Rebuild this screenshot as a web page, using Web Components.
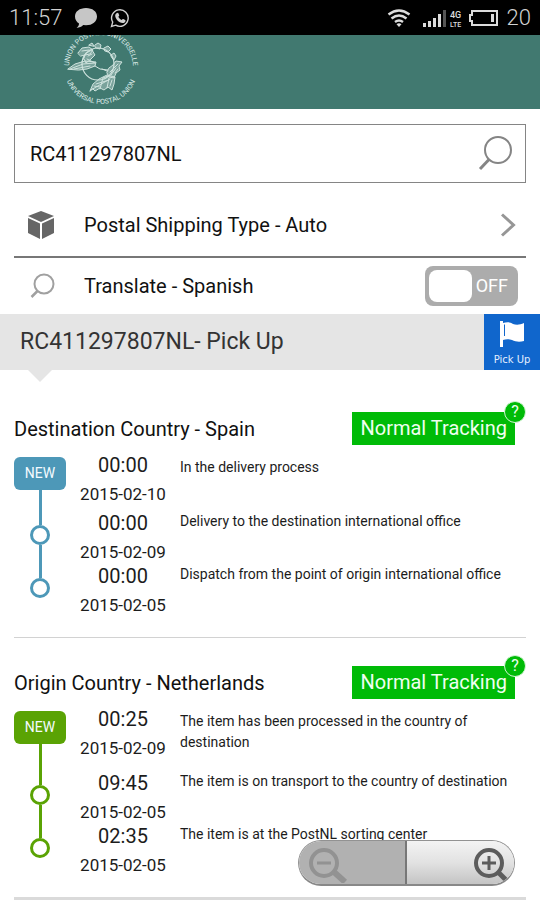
<!DOCTYPE html>
<html lang="en">
<head>
<meta charset="utf-8">
<meta name="viewport" content="width=device-width, initial-scale=1">
<title>Postal tracking</title>
<style>
  body {
    margin: 0;
    background: #fff;
    color: #1c1c1c;
    font-family: Roboto, "Liberation Sans", sans-serif;
    font-size: 20px;
  }
</style>
</head>
<body>

<template id="status-bar-template">
  <style>
    :host {
      display: flex;
      align-items: center;
      justify-content: space-between;
      height: 35px;
      padding: 0 9px;
      background: #000;
      color: #d2d2d2;
      font-size: 22px;
      font-weight: 300;
    }
    div { display: flex; align-items: center; }
    .left { gap: 12px; }
    .right { gap: 4px; }
    .level { margin-left: 4px; }
    svg { display: block; }
  </style>
  <div class="left">
    <span>11:57</span>
    <svg width="24" height="22" viewBox="0 0 24 22"><path fill="#c6c6c6" d="M12 1C5.500 1 1 4.500 1 9.500c0 3 1.600 5.400 4 7 0 2-1 3.300-2.400 4.400 2.700 0 5-1 6.600-2.800l2.800.2c6.500 0 11-3.800 11-8.800S18.500 1 12 1z"/></svg>
    <svg width="20" height="20" viewBox="0 0 20 20"><path fill="none" stroke="#d0d0d0" stroke-width="1.400" d="M1.500 18.500l1.200-4.300a8.300 8.300 0 1 1 3 3z"/><path fill="#d0d0d0" d="M6.500 5.200l1.200-.4c.4 0 .6.200.7.500l.8 1.900c.1.300 0 .6-.9 1.500.8 1.600 1.900 2.600 3.500 3.400.8-1 1.100-1.200 1.500-1l1.800.9c.4.200.5.500.4.900-.3 1.500-1.600 2.200-2.900 2.100-3.700-.3-7.400-4-7.400-7.500 0-.9.500-1.800 1.300-2.300z"/></svg>
  </div>
  <div class="right">
    <svg width="24" height="18" viewBox="0 0 24 18"><g fill="none" stroke="#dcdcdc" stroke-width="2.400"><path d="M1.500 5.500q10.500-8 21 0"/><path d="M4.500 9.500q7.500-6 15 0"/><path d="M8 13q4-3.200 8 0"/></g><path fill="#dcdcdc" d="M9.500 15.200q2.500-2 5 0L12 18z"/></svg>
    <svg width="49" height="20" viewBox="0 0 49 20"><g fill="#dcdcdc"><path d="M8 15h3v4H8zM13 13h3v6h-3zM18 10h3v9h-3zM23 6h3v13h-3z"/><path fill="#555" d="M28 2h3v17h-3z"/><text x="35" y="10" font-size="9" font-weight="500" font-family="Roboto, sans-serif">4G</text><text x="35" y="19" font-size="7" font-weight="500" font-family="Roboto, sans-serif">LTE</text></g></svg>
    <svg width="31" height="18" viewBox="0 0 31 18"><path fill="none" stroke="#dcdcdc" stroke-width="2" d="M4 2h25v14H4v-4H2V6h2z"/><path fill="#dcdcdc" d="M23 5h3v8h-3z"/></svg>
    <span class="level">20</span>
  </div>
</template>

<template id="brand-header-template">
  <style>
    :host {
      display: block;
      height: 74px;
      padding: 0 61px;
      overflow: hidden;
      background: #417970;
    }
    svg { display: block; }
    text {
      font: 7px Roboto, "Liberation Sans", sans-serif;
      fill: #deece9;
      text-anchor: middle;
    }
  </style>
  <svg width="80" height="74" viewBox="0 0 80 74" role="img" aria-label="Universal Postal Union">
    <defs>
      <path id="ring-top" d="M8 32a32 32 0 0 1 64 0"/>
      <path id="ring-bottom" d="M3 32a37 37 0 0 0 74 0"/>
    </defs>
    <text><textPath href="#ring-top" startOffset="50%">UNION POSTALE UNIVERSELLE</textPath></text>
    <text><textPath href="#ring-bottom" startOffset="50%">UNIVERSAL POSTAL UNION</textPath></text>
    <g fill="#cfe3de" fill-opacity=".4" stroke="#cfe3de" stroke-linecap="round" stroke-linejoin="round">
      <circle cx="37" cy="29" r="16" fill="none" stroke-width="1.200"/>
      <!-- figures passing letters around the globe -->
      <path d="M17 18l4-5 7-1 4 3-3 4-5 1-4 1zM25 18l6-3 3 5-4 4-5 4-2-4z"/>
      <path d="M34 10l3-2 3 2-1 4-4-1zM43 13l4-2 3 3-3 3-3-1zM50 20l3-2 2 3-2 4-2-2zM28 10l3-2 2 3z"/>
      <path d="M7 34l7-5 10-3 11 1-1 4-8 3-8 1z"/>
      <path fill="none" d="M9 34l13-5 12-1M13 34l16-3M34 31l5 3 8 1M26 24l8 4M21 16l7-1M27 21l4-2M23 22l-2 5"/>
      <path d="M48 33l4-3 3-4 6 1-3 4 1 4-4 3-2 5-5-1-2-4z"/>
      <path fill="none" d="M49 37l8-8M50 40l5-7M46 36l-5-2M54 38l3-4M47 41l-5 2"/>
      <path d="M29 56l3-7 6-5 8-4 8 2-1 7-2 6-4-3-4 3-4-2-5 3-2-2z"/>
      <path fill="none" d="M30 55l19-11M35 49l13-4M42 43l-3 11M48 43l-2 10M33 51l6 1M51 45l-2 6"/>
    </g>
  </svg>
</template>

<template id="tracking-search-template">
  <style>
    :host { display: block; padding: 15px 14px 0; }
    form {
      display: flex;
      align-items: center;
      box-sizing: border-box;
      height: 59px;
      padding: 0 11px 0 15px;
      border: 1px solid #858585;
    }
    input {
      flex: 1;
      min-width: 0;
      padding: 0;
      border: 0;
      outline: 0;
      background: none;
      color: #111;
      font: inherit;
    }
    button { padding: 0; border: 0; background: none; }
    svg { display: block; }
  </style>
  <form>
    <input type="text" aria-label="Tracking number">
    <button type="button" aria-label="Search">
      <svg width="36" height="36" viewBox="0 0 36 36" fill="none" stroke="#858585"><circle cx="20" cy="14" r="13" stroke-width="2"/><path stroke-width="3" d="M11 23.500L2 33"/></svg>
    </button>
  </form>
</template>

<template id="option-row-template">
  <style>
    :host {
      display: flex;
      align-items: center;
      height: 56px;
      margin: 0 14px;
      padding: 0 8px 0 12px;
      color: #111;
    }
    :host([divided]) {
      height: 63px;
      padding: 10px 10px 0 12px;
      border-bottom: 2px solid #777;
    }
    .icon { display: flex; width: 58px; }
    .label { flex: 1; }
  </style>
  <span class="icon"><slot name="icon"></slot></span>
  <span class="label"><slot></slot></span>
  <slot name="control"></slot>
</template>

<template id="toggle-switch-template">
  <style>
    :host { display: block; }
    label {
      display: flex;
      align-items: center;
      justify-content: space-between;
      box-sizing: border-box;
      width: 93px;
      height: 40px;
      padding: 0 10px 2px 4px;
      border-radius: 8px;
      background: #acacac;
      color: #fff;
      font-size: 18px;
    }
    input {
      appearance: none;
      width: 43px;
      height: 32px;
      margin: 2px 0 0;
      border-radius: 8px;
      background: #fff;
    }
  </style>
  <label><input type="checkbox" role="switch"><span>OFF</span></label>
</template>

<template id="result-bar-template">
  <style>
    :host {
      display: flex;
      position: relative;
      align-items: stretch;
      height: 56px;
      background: #e5e5e5;
      color: #333;
      font-size: 23px;
    }
    /* pointer under the bar */
    :host::after {
      content: "";
      position: absolute;
      top: 100%;
      left: 28px;
      border: 12px solid transparent;
      border-top-color: #e5e5e5;
      border-bottom: 0;
    }
    h1 {
      flex: 1;
      margin: 0;
      padding-left: 20px;
      font: inherit;
      line-height: 56px;
    }
    button {
      display: flex;
      flex-direction: column;
      align-items: center;
      justify-content: space-between;
      width: 56px;
      padding: 6px 0 4px;
      border: 0;
      background: #1066cc;
      color: #e3efff;
      font: 10px/12px "DejaVu Sans", sans-serif;
    }
  </style>
  <h1><slot></slot></h1>
  <button type="button">
    <svg width="24" height="28" viewBox="0 0 24 28"><path fill="#fff" d="M0 1h3v26H0zM3 3c4-1 7-1 10 1 3 1 7 1 11-1v18c-4 1-8 1-12-1-3-1-6-1-9 0z"/><path stroke="#1066cc" d="M4.500 4.500V16"/></svg>
    <span>Pick Up</span>
  </button>
</template>

<template id="tracking-section-template">
  <style>
    :host {
      display: block;
      --accent: #4d98b8;
      margin: 0 14px;
      padding: 28px 0 20px;
      border-bottom: 1px solid #d2d2d2;
    }
    :host([first]) { padding-top: 42px; }
    :host([last]) { border-bottom: 3px solid #dadada; }
    header {
      display: flex;
      align-items: center;
      justify-content: space-between;
      margin-bottom: 8px;
      padding-right: 11px;
    }
    h2 { margin: 0; color: #111; font: inherit; }
    .state {
      position: relative;
      padding: 0 8px;
      background: #00bb07;
      color: #effff0;
      line-height: 33px;
    }
    .help {
      position: absolute;
      top: -11px;
      right: -11px;
      width: 22px;
      height: 22px;
      padding: 0;
      border: 1px solid #d5f5d6;
      border-radius: 50%;
      background: #00bb07;
      color: #effff0;
      font: 16px/20px Roboto, sans-serif;
    }
  </style>
  <header>
    <h2></h2>
    <div class="state">Normal Tracking<button class="help" type="button">?</button></div>
  </header>
  <div role="list"><slot></slot></div>
</template>

<template id="tracking-event-template">
  <style>
    :host {
      display: grid;
      grid-template-columns: 52px 114px 1fr;
      min-height: 53px;
      color: #1c1c1c;
    }
    .marker {
      display: flex;
      flex-direction: column;
      align-items: center;
    }
    .line { width: 3px; height: 14px; background: var(--accent); }
    .line.rest { flex: 1; }
    .dot {
      box-sizing: border-box;
      width: 20px;
      height: 20px;
      border: 3px solid var(--accent);
      border-radius: 50%;
    }
    .badge {
      display: none;
      width: 52px;
      margin-top: 4px;
      border-radius: 6px;
      background: var(--accent);
      color: #f4fbff;
      font-size: 14px;
      line-height: 33px;
      text-align: center;
    }
    time {
      display: flex;
      flex-direction: column;
      align-items: center;
      gap: 6px;
    }
    .clock { line-height: 24px; }
    .date { font-size: 17px; line-height: 22px; }
    p { margin: 0; font-size: 14px; line-height: 21px; }
    :host([newest]) .badge { display: block; }
    :host([newest]) .dot,
    :host([newest]) .line:not(.rest) { display: none; }
    :host([newest]) time { padding-bottom: 6px; }
    :host([newest]) p { padding: 4px 0 18px; }
    :host([oldest]) .rest { visibility: hidden; }
  </style>
  <div class="marker">
    <span class="badge">NEW</span>
    <span class="line"></span>
    <span class="dot"></span>
    <span class="line rest"></span>
  </div>
  <time><span class="clock"></span><span class="date"></span></time>
  <p><slot></slot></p>
</template>

<template id="zoom-control-template">
  <style>
    :host {
      display: flex;
      position: fixed;
      right: 25px;
      bottom: 14px;
      box-sizing: border-box;
      width: 217px;
      height: 46px;
      overflow: hidden;
      border: 1px solid #929292;
      border-bottom: 2px solid #888;
      border-radius: 23px;
    }
    button {
      display: flex;
      box-sizing: border-box;
      width: 50%;
      align-items: center;
      padding: 2px 6px 0 8px;
      border: 0;
    }
    .out { background: #b1b1b1; border-right: 2px solid #777; }
    .in {
      justify-content: flex-end;
      background: linear-gradient(#f3f3f3, #e2e2e2 50%, #c4c4c4);
    }
  </style>
  <button class="out" type="button" aria-label="Zoom out" disabled>
    <svg width="42" height="38" viewBox="0 0 42 38" fill="none" stroke="#929292"><circle cx="17" cy="18" r="13" stroke-width="4"/><path stroke-width="3" d="M10 18h14"/><path stroke-width="6" d="M27 27l11 10"/></svg>
  </button>
  <button class="in" type="button" aria-label="Zoom in">
    <svg width="36" height="38" viewBox="0 0 36 38" fill="none" stroke="#5c5c5c"><circle cx="17" cy="18" r="13" stroke-width="4"/><path stroke-width="3" d="M10 18h14M17 11v14"/><path stroke-width="5" d="M26 27l9 9"/></svg>
  </button>
</template>

<status-bar></status-bar>
<brand-header></brand-header>
<main>
  <tracking-search value="RC411297807NL"></tracking-search>
  <option-row divided>
    <svg slot="icon" width="30" height="30" viewBox="0 0 30 30"><g fill="#666"><path d="M15 1l13 5-13 6L2 6z"/><path d="M2 8l12 5.500V29L2 23z"/><path d="M28 8l-12 5.500V29l12-6z"/></g></svg>
    Postal Shipping Type - Auto
    <svg slot="control" width="16" height="24" viewBox="0 0 16 24"><path fill="none" stroke="#969696" stroke-width="3" d="M2 1.500L13.500 12 2 22.500"/></svg>
  </option-row>
  <option-row>
    <svg slot="icon" width="30" height="26" viewBox="0 0 30 26" fill="none" stroke="#a0a0a0"><circle cx="18" cy="11" r="9.500" stroke-width="2"/><path stroke-width="2.500" d="M11.500 18L5.500 24"/></svg>
    Translate - Spanish
    <toggle-switch slot="control" label="Translate"></toggle-switch>
  </option-row>
  <result-bar>RC411297807NL- Pick Up</result-bar>
  <tracking-section first heading="Destination Country - Spain">
    <tracking-event newest clock="00:00" date="2015-02-10">In the delivery process</tracking-event>
    <tracking-event clock="00:00" date="2015-02-09">Delivery to the destination international office</tracking-event>
    <tracking-event oldest clock="00:00" date="2015-02-05">Dispatch from the point of origin international office</tracking-event>
  </tracking-section>
  <tracking-section last accent="#5aa304" heading="Origin Country - Netherlands">
    <tracking-event newest clock="00:25" date="2015-02-09">The item has been processed in the country of destination</tracking-event>
    <tracking-event clock="09:45" date="2015-02-05">The item is on transport to the country of destination</tracking-event>
    <tracking-event oldest clock="02:35" date="2015-02-05">The item is at the PostNL sorting center</tracking-event>
  </tracking-section>
</main>
<zoom-control></zoom-control>

<script>
  (function () {
    class TemplateElement extends HTMLElement {
      constructor() {
        super();
        const template = document.querySelector(`#${this.localName}-template`);
        this.attachShadow({ mode: "open" });
        this.shadowRoot.appendChild(template.content.cloneNode(true));
      }

      find(selector) {
        return this.shadowRoot.querySelector(selector);
      }
    }

    customElements.define("status-bar", class extends TemplateElement {});
    customElements.define("brand-header", class extends TemplateElement {});
    customElements.define("option-row", class extends TemplateElement {});
    customElements.define("result-bar", class extends TemplateElement {});
    customElements.define("zoom-control", class extends TemplateElement {});

    customElements.define(
      "tracking-search",
      class extends TemplateElement {
        connectedCallback() {
          this.find("input").value = this.getAttribute("value");
        }
      }
    );

    customElements.define(
      "toggle-switch",
      class extends TemplateElement {
        connectedCallback() {
          const input = this.find("input");
          input.setAttribute("aria-label", this.getAttribute("label"));
          input.addEventListener("change", () => {
            this.find("span").textContent = input.checked ? "ON" : "OFF";
          });
        }
      }
    );

    customElements.define(
      "tracking-section",
      class extends TemplateElement {
        connectedCallback() {
          this.find("h2").textContent = this.getAttribute("heading");
          if (this.hasAttribute("accent")) {
            this.style.setProperty("--accent", this.getAttribute("accent"));
          }
        }
      }
    );

    customElements.define(
      "tracking-event",
      class extends TemplateElement {
        connectedCallback() {
          this.setAttribute("role", "listitem");
          this.find(".clock").textContent = this.getAttribute("clock");
          this.find(".date").textContent = this.getAttribute("date");
        }
      }
    );
  })();
</script>
</body>
</html>
